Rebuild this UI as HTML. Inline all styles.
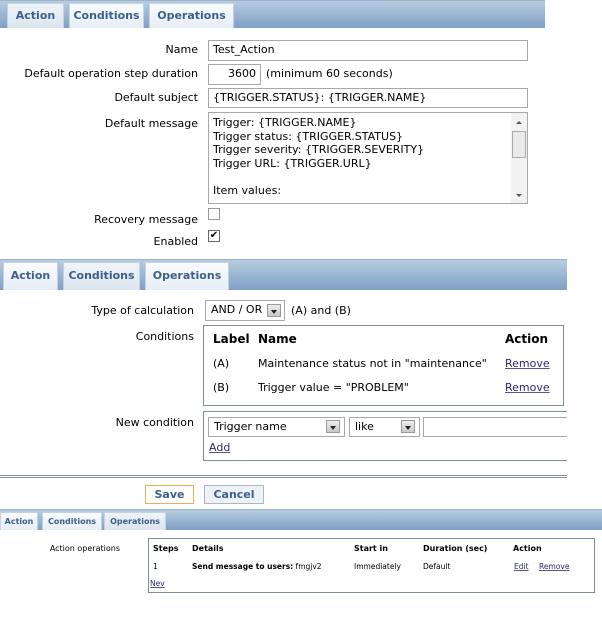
<!DOCTYPE html>
<html><head><style>
*{margin:0;padding:0;box-sizing:border-box}
body{width:602px;height:642px;background:#fff;position:relative;overflow:hidden;font-family:"DejaVu Sans","Liberation Sans",sans-serif;font-size:11px;color:#000}
.a{position:absolute;white-space:nowrap}
.bar{position:absolute;background:linear-gradient(#b8cce0,#9ab6d4 50%,#7f9fc4);border-top:1px solid #9cb3cc}
.tab{position:absolute;background:linear-gradient(#fafcfe,#e6edf5);border:1px solid #c4d2e2;border-bottom:none;color:#3b5f8c;font-weight:bold;text-align:center}
.tab.on{background:linear-gradient(#f0f4f8,#dbe5ef)}
.lbl{position:absolute;text-align:right;white-space:nowrap}
.inp{position:absolute;border:1px solid #a8a8a8;background:#fff;padding:2px 4px;white-space:nowrap;overflow:hidden}
.box{position:absolute;border:1px solid #7c8aa8}
.lnk{color:#2a2a66;text-decoration:underline;text-decoration-color:#555599}
.sel{position:absolute;border:1px solid #a8a8a8;background:#fff;padding:2px 5px}
.arr{position:absolute;width:14px;height:13px;background:linear-gradient(#eee,#c8c8c8);border:1px solid #999}
.arr:after{content:"";position:absolute;left:3px;top:5px;border:3px solid transparent;border-top:4px solid #222}
</style></head><body>
<div class="bar" style="left:0;top:0;width:545px;height:28px"></div>
<div class="tab on" style="left:7px;top:3px;width:57px;height:25px;line-height:24px">Action</div>
<div class="tab" style="left:69px;top:3px;width:75px;height:25px;line-height:24px">Conditions</div>
<div class="tab" style="left:149px;top:3px;width:85px;height:25px;line-height:24px">Operations</div>
<div class="lbl" style="right:404px;top:43px">Name</div>
<div class="inp" style="left:208px;top:40px;width:320px;height:21px">Test_Action</div>
<div class="lbl" style="right:404px;top:67px">Default operation step duration</div>
<div class="inp" style="left:208px;top:64px;width:53px;height:21px;text-align:right">3600</div>
<div class="a" style="left:266px;top:67px">(minimum 60 seconds)</div>
<div class="lbl" style="right:404px;top:91px">Default subject</div>
<div class="inp" style="left:208px;top:88px;width:320px;height:20px">{TRIGGER.STATUS}: {TRIGGER.NAME}</div>
<div class="lbl" style="right:404px;top:117px">Default message</div>
<div class="inp" style="left:208px;top:112px;width:320px;height:92px;line-height:13.5px;padding-top:3px">Trigger: {TRIGGER.NAME}<br>Trigger status: {TRIGGER.STATUS}<br>Trigger severity: {TRIGGER.SEVERITY}<br>Trigger URL: {TRIGGER.URL}<br><br>Item values:</div>
<div class="a" style="left:511px;top:113px;width:16px;height:90px;background:#f2f2f2"></div>
<div class="a" style="left:516px;top:118px;border:3px solid transparent;border-bottom:3px solid #555"></div>
<div class="a" style="left:516px;top:194px;border:3px solid transparent;border-top:3px solid #555"></div>
<div class="a" style="left:512px;top:131px;width:14px;height:27px;background:#eaeaea;border:1px solid #aaa"></div>
<div class="lbl" style="right:404px;top:213px">Recovery message</div>
<div class="a" style="left:208px;top:208px;width:12px;height:12px;border:1px solid #999;background:#fff"></div>
<div class="lbl" style="right:404px;top:235px">Enabled</div>
<div class="a" style="left:208px;top:230px;width:12px;height:12px;border:1px solid #666;background:#fff;font-size:10px;line-height:10px;text-align:center">✔</div>
<div class="bar" style="left:0;top:259px;width:567px;height:31px"></div>
<div class="tab" style="left:3px;top:262px;width:55px;height:28px;line-height:26px">Action</div>
<div class="tab on" style="left:63px;top:262px;width:77px;height:28px;line-height:26px">Conditions</div>
<div class="tab" style="left:145px;top:262px;width:84px;height:28px;line-height:26px">Operations</div>
<div class="lbl" style="right:408px;top:304px">Type of calculation</div>
<div class="sel" style="left:205px;top:300px;width:80px;height:21px">AND / OR</div>
<div class="arr" style="left:267px;top:304px"></div>
<div class="a" style="left:291px;top:304px">(A) and (B)</div>
<div class="lbl" style="right:408px;top:330px">Conditions</div>
<div class="box" style="left:203px;top:325px;width:361px;height:81px"></div>
<div class="a" style="left:213px;top:332px;font-weight:bold;font-size:12px">Label</div>
<div class="a" style="left:258px;top:332px;font-weight:bold;font-size:12px">Name</div>
<div class="a" style="left:505px;top:332px;font-weight:bold;font-size:12px">Action</div>
<div class="a" style="left:213px;top:357px">(A)</div>
<div class="a" style="left:258px;top:357px">Maintenance status not in "maintenance"</div>
<div class="a lnk" style="left:505px;top:357px">Remove</div>
<div class="a" style="left:213px;top:381px">(B)</div>
<div class="a" style="left:258px;top:381px">Trigger value = "PROBLEM"</div>
<div class="a lnk" style="left:505px;top:381px">Remove</div>
<div class="lbl" style="right:408px;top:416px">New condition</div>
<div class="a" style="left:203px;top:411px;width:364px;height:50px;border:1px solid #7c8aa8;border-right:none"></div>
<div class="sel" style="left:208px;top:417px;width:137px;height:20px">Trigger name</div>
<div class="arr" style="left:326px;top:420px"></div>
<div class="sel" style="left:349px;top:417px;width:71px;height:20px">like</div>
<div class="arr" style="left:401px;top:420px"></div>
<div class="a" style="left:423px;top:417px;width:144px;height:20px;border:1px solid #a8a8a8;border-right:none"></div>
<div class="a lnk" style="left:209px;top:441px">Add</div>
<div class="a" style="left:0;top:475px;width:567px;height:3px;border-top:1px solid #8090a8;border-bottom:1px solid #8090a8"></div>
<div class="a" style="left:145px;top:485px;width:49px;height:19px;border:1px solid #e8b050;background:#fff;color:#3b5f8c;font-weight:bold;text-align:center;line-height:17px">Save</div>
<div class="a" style="left:204px;top:485px;width:60px;height:19px;border:1px solid #a8b8c8;background:#eef2f6;color:#3b5f8c;font-weight:bold;text-align:center;line-height:17px">Cancel</div>
<div class="bar" style="left:0;top:509px;width:602px;height:21px"></div>
<div class="tab" style="left:0;top:512px;width:38px;height:18px;line-height:17px;font-size:8px">Action</div>
<div class="tab" style="left:42px;top:512px;width:60px;height:18px;line-height:17px;font-size:8px">Conditions</div>
<div class="tab on" style="left:104px;top:512px;width:62px;height:18px;line-height:17px;font-size:8px">Operations</div>
<div class="lbl" style="right:482px;top:544px;font-size:8px">Action operations</div>
<div class="box" style="left:148px;top:538px;width:447px;height:55px"></div>
<div class="a" style="left:153px;top:544px;font-size:8px;font-weight:bold">Steps</div>
<div class="a" style="left:192px;top:544px;font-size:8px;font-weight:bold">Details</div>
<div class="a" style="left:354px;top:544px;font-size:8px;font-weight:bold">Start in</div>
<div class="a" style="left:423px;top:544px;font-size:8px;font-weight:bold">Duration (sec)</div>
<div class="a" style="left:513px;top:544px;font-size:8px;font-weight:bold">Action</div>
<div class="a" style="left:153px;top:562px;font-size:7.5px">1</div>
<div class="a" style="left:192px;top:562px;font-size:7.5px"><b>Send message to users:</b> fmgjv2</div>
<div class="a" style="left:354px;top:562px;font-size:7.5px">Immediately</div>
<div class="a" style="left:423px;top:562px;font-size:7.5px">Default</div>
<div class="a lnk" style="left:514px;top:562px;font-size:7.5px">Edit</div>
<div class="a lnk" style="left:539px;top:562px;font-size:7.5px">Remove</div>
<div class="a lnk" style="left:150px;top:579px;font-size:7.5px">Nev</div>
</body></html>
